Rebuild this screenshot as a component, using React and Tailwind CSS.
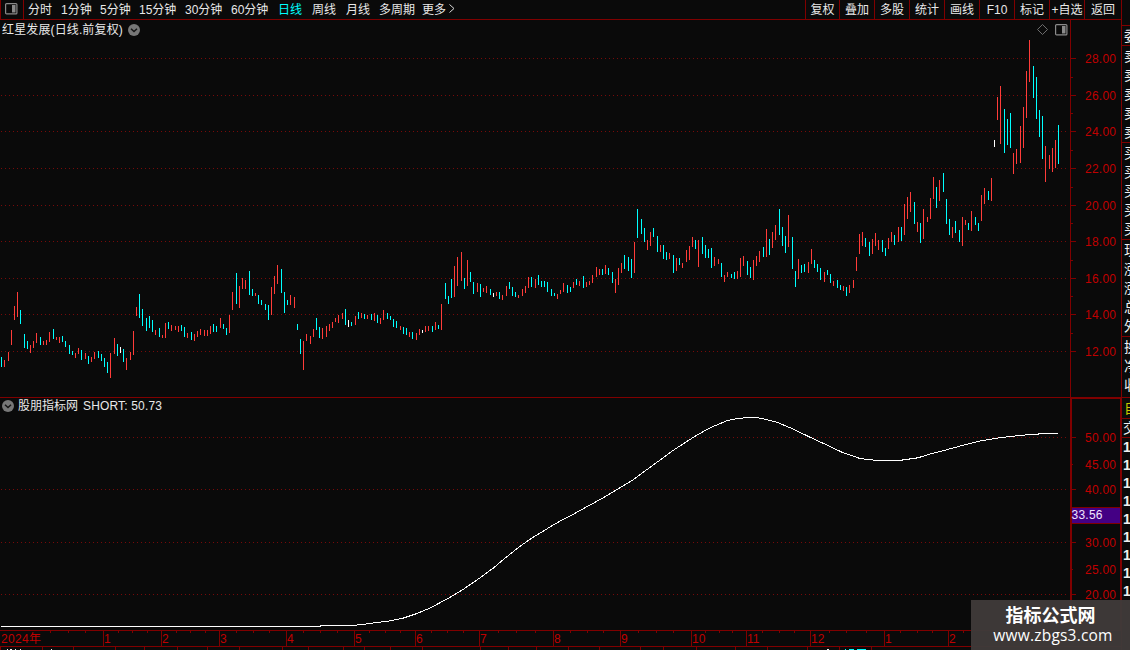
import React from "react";

const FONT = "'Liberation Sans','Noto Sans CJK SC',sans-serif";

// Daily bars: x, high y, low y, direction (r = up, c = down, w = flat)
const BARS = `
1,357,367,c 4,360,367,r 8,352,361,r 11,330,345,r 14,306,320,r 17,292,317,r 20,310,324,c 24,334,348,c 27,341,349,c
30,345,353,r 33,341,348,r 36,333,343,r 40,337,345,c 43,341,345,r 46,340,345,r 49,332,342,r 53,329,339,c 56,337,340,r
59,337,343,r 62,336,342,c 65,341,347,c 69,345,354,c 72,351,355,c 75,353,358,r 78,348,354,r 81,350,360,c 85,353,359,r
88,356,364,c 91,357,362,r 94,352,359,r 98,351,358,c 101,354,361,c 104,358,367,c 107,362,373,c 110,353,378,r
114,338,354,r 117,344,356,c 120,347,353,w 123,349,362,c 126,358,370,r 130,352,360,r 133,331,355,r 136,307,316,r
139,294,318,c 142,309,326,c 146,318,331,c 149,316,328,c 152,320,332,c 155,330,335,r 159,328,337,c 162,335,338,r
165,323,338,r 168,322,329,c 171,325,331,r 175,326,330,r 178,326,332,r 181,325,331,c 184,327,337,c 187,333,338,r
191,332,340,c 194,334,341,r 197,331,337,r 200,329,335,r 204,330,336,r 207,330,336,r 210,326,334,r 213,324,332,c
216,326,332,c 220,318,328,r 223,324,329,c 226,328,335,c 229,315,333,r 232,292,310,r 236,273,304,c 239,286,308,r
242,278,289,r 245,280,289,r 249,271,295,c 252,289,296,c 255,293,296,r 258,295,304,c 261,300,305,c 265,304,310,c
268,305,320,c 271,287,315,r 274,276,294,r 277,265,284,r 281,269,293,c 284,292,313,c 287,300,305,c 290,295,305,r
294,297,308,r 297,324,330,c 300,339,354,c 303,341,370,r 306,334,341,r 310,336,344,r 313,329,337,r 316,318,330,c
319,327,338,c 322,328,339,r 326,326,337,r 329,324,331,r 332,322,328,r 335,318,322,r 338,315,323,r 342,313,319,r
345,309,325,c 348,320,327,w 351,322,326,c 355,316,325,r 358,312,319,c 361,313,318,r 364,314,319,c 367,315,319,r
371,314,320,c 374,313,321,r 377,315,323,c 380,318,324,r 383,310,320,r 387,313,319,c 390,316,320,c 393,319,327,c
396,321,328,c 400,326,330,r 403,327,334,c 406,328,335,c 409,332,337,r 412,332,339,c 416,333,340,r 419,329,335,r
422,330,333,w 425,326,332,r 428,326,331,r 432,326,332,c 435,322,330,r 438,325,329,c 441,304,330,r 445,283,299,c
448,296,304,c 451,279,298,c 454,266,297,r 457,257,286,r 461,252,281,r 464,278,289,c 467,260,286,r 470,272,282,c
473,282,294,c 477,283,292,r 480,284,297,c 483,288,292,r 486,286,293,r 490,289,295,c 493,293,297,w 496,292,296,r
499,292,299,c 502,295,300,r 506,286,296,r 509,282,289,c 512,287,296,c 515,292,297,c 518,295,298,r 522,289,296,r
525,286,293,r 528,277,288,r 531,277,287,c 535,279,288,r 538,275,285,c 541,281,287,c 544,281,287,c 547,282,292,c
551,289,296,c 554,293,296,c 557,294,299,r 560,290,294,r 563,283,292,r 567,285,293,c 570,287,292,c 573,282,288,r
576,279,285,c 579,281,286,r 583,276,288,c 586,282,287,r 589,281,285,r 592,275,283,r 596,267,277,r 599,269,275,r
602,269,275,c 605,265,274,r 608,268,275,c 612,272,283,c 615,279,293,r 618,268,285,r 621,263,273,r 624,255,269,c
628,257,271,c 631,259,278,c 634,242,273,r 637,209,238,c 641,219,234,c 644,228,242,c 647,240,250,r 650,232,246,r
653,228,237,c 657,236,252,c 660,245,252,r 663,245,259,c 666,252,260,c 669,253,259,r 673,255,273,c 676,258,271,r
679,258,265,c 682,263,268,r 686,250,262,r 689,246,260,r 692,237,247,r 695,240,249,c 698,240,267,r 702,237,254,c
705,245,258,c 708,249,258,c 711,248,268,c 714,257,266,r 718,259,264,r 721,263,277,c 724,275,282,r 727,272,277,r
731,274,278,c 734,272,279,c 737,271,279,r 740,258,277,r 743,256,266,r 747,261,275,c 750,267,278,c 753,260,280,r
756,256,266,r 759,251,262,r 763,247,257,c 766,229,257,r 769,239,255,c 772,232,248,r 775,225,240,r 779,209,235,c
782,227,246,c 785,236,253,c 788,215,247,r 792,237,269,c 795,271,287,c 798,259,279,r 801,265,273,c 804,264,272,c
808,262,273,r 811,249,264,r 814,260,268,c 817,264,272,c 820,268,280,c 824,272,282,r 827,270,275,c 830,274,283,c
833,281,286,r 837,280,288,c 840,285,290,c 843,286,291,r 846,287,296,c 849,285,293,r 853,280,288,r 856,257,271,r
859,234,254,r 862,232,246,r 865,238,247,c 869,242,256,c 872,239,254,r 875,233,246,r 878,240,250,r 882,240,252,c
885,248,256,c 888,238,249,r 891,232,242,r 894,235,245,c 898,227,242,r 901,227,241,c 904,204,235,r 907,197,219,r
910,192,212,r 914,202,224,c 917,222,232,r 920,223,243,c 923,209,239,r 927,217,222,r 930,198,219,r 933,177,199,r
936,187,208,c 939,180,201,r 943,173,192,c 946,199,224,c 949,219,235,c 952,227,238,r 955,221,233,c 959,230,242,c
962,217,246,r 965,220,225,r 968,223,230,c 971,211,231,r 975,217,225,c 978,223,231,c 981,195,221,r 984,188,204,r
988,191,200,c 991,178,201,r 994,140,147,w 997,97,120,r 1000,86,144,r 1004,109,153,c 1007,119,145,c 1010,113,148,c
1013,153,174,r 1016,149,164,r 1020,126,163,r 1023,107,148,r 1026,71,118,r 1029,40,82,r 1033,66,98,c 1036,77,119,c
1039,110,137,c 1042,116,159,c 1045,146,182,r 1049,155,169,r 1052,148,172,r 1055,140,168,r 1058,125,164,c`
  .trim()
  .split(/\s+/)
  .map((s) => {
    const [x, t, b, k] = s.split(",");
    return { x: +x, t: +t, h: b - t, k };
  });

const BAR_COLOR = { r: "#ff3c39", c: "#00ffff", w: "#ffffff" };

const PRICE_TICKS = [
  [58, "28.00"], [95, "26.00"], [131, "24.00"], [168, "22.00"], [205, "20.00"],
  [241, "18.00"], [278, "16.00"], [314, "14.00"], [351, "12.00"],
];
const PRICE_MINOR = [77, 113, 150, 187, 223, 260, 296, 333];
const IND_TICKS = [[437, "50.00"], [489, "40.00"], [542, "30.00"], [594, "20.00"]];
const IND_MINOR = [[464, "45.00"], [569, "25.00"]];

const CURVE =
  "1,626 320,626 321,625 352,625 366,623.5 377,622 389,620.5 402,618 417,613 430,607.5 448,598 463,589 479.5,577.7 493.4,567.5 504,558.5 519,546.5 532,537.5 554,524 563,519 571,515 584.5,507.5 602,498 617,489 632,480 645,470.5 658,461 673,450 693,437 701.5,432 712,426.5 727.5,420 736,418.3 747,417 756,417 766.5,419 777.5,422 792.5,428.3 810,436.7 831.6,446.7 842.5,452 860,458 877,460 899,460 918,457.3 931,453.3 948.7,448.7 966,444 981,440.3 1001,437 1022.4,434.7 1040,433.4 1058,433";

const MONTHS = [
  [103, "1"], [161, "2"], [219, "3"], [286, "4"], [354, "5"], [415, "6"], [479, "7"],
  [553, "8"], [620, "9"], [691, "10"], [746, "11"], [810, "12"], [884, "1"], [948, "2"],
];
const WEEK_TICKS = [
  50, 68, 85, 118, 132, 147, 176, 190, 205, 236, 253, 269, 303, 320, 337, 369, 385, 400, 431, 447, 463, 498,
  516, 535, 570, 587, 603, 638, 656, 673, 705, 719, 732, 762, 779, 794, 829, 846, 866, 900, 917, 932, 963,
];
const TAB_TICKS = [
  0, 42, 73, 115, 144, 177, 207, 239, 282, 308, 343, 364, 390, 422, 480, 508, 536, 568, 599, 640, 663, 696,
  735, 767, 807, 839, 871,
];

const PERIODS = [
  ["分时", "w-[33px]"], ["1分钟", "w-[39px]"], ["5分钟", "w-[39px]"], ["15分钟", "w-[46px]"],
  ["30分钟", "w-[46px]"], ["60分钟", "w-[47px]"], ["日线", "w-[34px]"], ["周线", "w-[34px]"],
  ["月线", "w-[33px]"], ["多周期", "w-[43px]"], ["更多", "w-[27px]"],
];
const ACTIONS = [
  ["复权", "w-[34px]"], ["叠加", "w-[35px]"], ["多股", "w-[35px]"], ["统计", "w-[35px]"], ["画线", "w-[35px]"],
  ["F10", "w-[35px]"], ["标记", "w-[35px]"], ["+自选", "w-[35px]"], ["返回", "w-[37px]"],
];

const QUOTE_GROUPS = [
  { rows: ["委"], box: "h-[20px]", row: "h-[19px]" },
  { rows: ["卖", "卖", "卖", "卖", "卖"], box: "h-[97px]", row: "h-[19.2px]" },
  { rows: ["买", "买", "买", "买", "买"], box: "h-[97px]", row: "h-[19.2px]" },
  { rows: ["现", "涨", "涨", "总", "外"], box: "h-[97px]", row: "h-[19.2px]" },
  { rows: ["换", "净", "收"], box: "h-[61px]", row: "h-[19.2px]" },
];

function DotGrid({ ys }) {
  return ys.map((y) => (
    <line key={y} x1="1" x2="1066" y1={y + 0.5} y2={y + 0.5} stroke="#780a0a" strokeDasharray="1 3" />
  ));
}

function AxisLabel({ y, text }) {
  return (
    <text x="1085" y={y + 5} fontSize="12" fill="#c00000" textLength="31" fontFamily={FONT}>
      {text}
    </text>
  );
}

function PanelIcon() {
  return (
    <svg width="13" height="12" viewBox="0 0 13 12" className="block shrink-0">
      <rect x="0.6" y="0.6" width="11.3" height="10.3" rx="1" fill="none" stroke="#8a8a8a" strokeWidth="1.2" />
      <rect x="7" y="2" width="3.5" height="7.5" fill="#8a8a8a" />
    </svg>
  );
}

function ChevronBadge() {
  return (
    <svg width="12" height="12" viewBox="0 0 12 12" className="block shrink-0">
      <circle cx="6" cy="6" r="6" fill="#777" />
      <path d="M3 4.8 6 7.5 9 4.8" fill="none" stroke="#151515" strokeWidth="1.5" />
    </svg>
  );
}

function Toolbar() {
  return (
    <div className="flex h-5 shrink-0 border-b border-[#800000] text-[#e8e8e8]">
      <div className="flex w-6 shrink-0 items-center border-x border-[#800000] pb-[2px] pl-[4px]">
        <PanelIcon />
      </div>
      <div className="flex grow items-center pl-[4px]">
        {PERIODS.map(([label, w]) => (
          <span key={label} className={`${w} shrink-0 ${label === "日线" ? "text-[#00ffff]" : ""}`}>
            {label}
          </span>
        ))}
        <svg width="6" height="9" viewBox="0 0 6 9" className="mb-[2px] block">
          <path d="M0.5 0.5 5 4.5 0.5 8.5" fill="none" stroke="#d8d8d8" />
        </svg>
      </div>
      {ACTIONS.map(([label, w]) => (
        <div key={label} className={`${w} flex shrink-0 items-center justify-center border-l border-[#800000]`}>
          {label}
        </div>
      ))}
    </div>
  );
}

function PriceChart() {
  return (
    <div className="flex h-[378px] shrink-0 border-b border-[#800000]">
      <div className="flex w-[1070px] shrink-0 flex-col">
        <div className="flex h-5 items-center pb-px pl-[2px] pr-[2px] text-[#e8e8e8]">
          <span className="w-[126px] shrink-0 tracking-[0.13px]">红星发展(日线.前复权)</span>
          <ChevronBadge />
          <span className="grow" />
          <svg width="11" height="11" viewBox="0 0 11 11" className="mr-[7px] block">
            <path d="M5.5 0.5 10.5 5.5 5.5 10.5 0.5 5.5Z" fill="none" stroke="#777" strokeWidth="0.9" />
          </svg>
          <PanelIcon />
        </div>
        <svg width="1070" height="357" viewBox="0 40 1070 357" shapeRendering="crispEdges" className="block">
          <DotGrid ys={PRICE_TICKS.map((t) => t[0])} />
          {BARS.map((b) => (
            <rect key={b.x} x={b.x} y={b.t} width="1" height={b.h} fill={BAR_COLOR[b.k]} />
          ))}
        </svg>
      </div>
      <svg width="51" height="377" viewBox="1070 20 51 377" className="block shrink-0">
        <g fill="#800000" shapeRendering="crispEdges">
          <rect x="1070" y="20" width="1" height="377" />
          {PRICE_TICKS.map(([y]) => (
            <rect key={y} x="1071" y={y} width="5" height="1" />
          ))}
          {PRICE_MINOR.map((y) => (
            <rect key={y} x="1071" y={y} width="2" height="1" />
          ))}
        </g>
        {PRICE_TICKS.map(([y, t]) => (
          <AxisLabel key={y} y={y} text={t} />
        ))}
      </svg>
    </div>
  );
}

function IndicatorChart() {
  return (
    <div className="flex h-[232px] shrink-0">
      <div className="flex w-[1070px] shrink-0 flex-col">
        <div className="flex h-4 items-center pl-[2px] text-[#e8e8e8]">
          <ChevronBadge />
          <span className="ml-[4px] w-[65px] shrink-0">股朋指标网</span>
          <span className="tracking-[0.16px]">SHORT: 50.73</span>
        </div>
        <svg width="1070" height="216" viewBox="0 414 1070 216" shapeRendering="crispEdges" className="block">
          <DotGrid ys={IND_TICKS.map((t) => t[0])} />
          <polyline points={CURVE} transform="translate(0 .5)" fill="none" stroke="#ffffff" strokeWidth="1" />
        </svg>
      </div>
      <svg width="51" height="232" viewBox="1070 398 51 232" className="block shrink-0">
        <g fill="#800000" shapeRendering="crispEdges">
          <rect x="1070" y="398" width="2" height="232" />
          <rect x="1120" y="398" width="1" height="232" />
          <rect x="1070" y="398" width="51" height="1" />
          {IND_TICKS.map(([y]) => (
            <rect key={y} x="1072" y={y} width="4" height="1" />
          ))}
          {IND_MINOR.map(([y]) => (
            <rect key={y} x="1072" y={y} width="1" height="1" />
          ))}
          <rect x="1072" y="507" width="48" height="17" />
          <rect x="1072" y="508" width="48" height="15" fill="#440084" />
        </g>
        {[...IND_TICKS, ...IND_MINOR].map(([y, t]) => (
          <AxisLabel key={y} y={y} text={t} />
        ))}
        <text x="1071.5" y="519" fontSize="12" fill="#f0e6ff" textLength="31" fontFamily={FONT}>33.56</text>
      </svg>
    </div>
  );
}

function DateAxis() {
  return (
    <svg width="1121" height="20" viewBox="0 630 1121 20" className="block shrink-0">
      <g fill="#800000" shapeRendering="crispEdges">
        <rect x="0" y="630" width="1121" height="1" />
        <rect x="0" y="646" width="1121" height="1" />
        {MONTHS.map(([x]) => (
          <rect key={x} x={x} y="631" width="1" height="15" />
        ))}
        {WEEK_TICKS.map((x) => (
          <rect key={x} x={x} y="631" width="1" height="2" />
        ))}
        {TAB_TICKS.map((x) => (
          <rect key={x} x={x} y="647" width="1" height="3" />
        ))}
      </g>
      <g fontSize="12" fill="#c00000" fontFamily={FONT}>
        <text x="1" y="643" textLength="40">2024年</text>
        {MONTHS.map(([x, t]) => (
          <text key={x} x={x + 1} y="643">{t}</text>
        ))}
      </g>
      <g shapeRendering="crispEdges" fill="#f0f0f0">
        <rect x="7" y="649" width="1" height="1" />
        <rect x="10" y="649" width="2" height="1" />
        <rect x="15" y="649" width="1" height="1" />
        <rect x="20" y="649" width="1" height="1" />
        <rect x="51" y="649" width="1" height="1" />
        <rect x="827" y="649" width="2" height="1" />
        <rect x="845" y="649" width="1" height="1" fill="#00ffff" />
        <rect x="849" y="649" width="5" height="1" fill="#00ffff" />
        <rect x="857" y="649" width="9" height="1" fill="#00ffff" />
      </g>
    </svg>
  );
}

function QuoteStrip() {
  return (
    <div className="flex w-[9px] shrink-0 flex-col overflow-hidden border-l border-[#800000] pt-[25px] text-[14px] leading-none text-[#f0f0f0]">
      {QUOTE_GROUPS.map((g, i) => (
        <div key={i} className={`${g.box} shrink-0 border-t border-[#800000]`}>
          {g.rows.map((r, j) => (
            <div key={j} className={`${g.row} flex w-5 items-center pl-[2px]`}>{r}</div>
          ))}
        </div>
      ))}
      <div className="flex h-[21px] w-5 shrink-0 items-center border-t border-[#800000] pl-[2px] text-[#c8c800]">自</div>
      <div className="flex h-[19px] w-5 shrink-0 items-center border-t border-[#800000] pl-[1px]">交</div>
      <div className="shrink-0 border-t border-[#800000]">
        {Array.from({ length: 9 }, (_, i) => (
          <div key={i} className="flex h-[18px] w-5 items-center pl-[1px] font-bold">1</div>
        ))}
      </div>
    </div>
  );
}

export default function App() {
  return (
    <div className="relative flex h-[650px] w-[1130px] overflow-hidden whitespace-nowrap bg-[#0a0a0a] font-['Liberation_Sans','Noto_Sans_CJK_SC',sans-serif] text-[12px] leading-none">
      <div className="flex w-[1121px] shrink-0 flex-col">
        <Toolbar />
        <PriceChart />
        <IndicatorChart />
        <DateAxis />
      </div>
      <QuoteStrip />
      <div className="absolute bottom-0 right-0 flex h-[50px] w-[159px] flex-col items-center bg-[#3f3a39]/97 pt-[6px] text-white">
        <div className="text-[18px] font-bold leading-[20px]">指标公式网</div>
        <div className="pl-[5px] font-['Open_Sans',sans-serif] text-[15.5px] leading-[19px] tracking-[0.2px]">www.zbgs3.com</div>
      </div>
    </div>
  );
}
